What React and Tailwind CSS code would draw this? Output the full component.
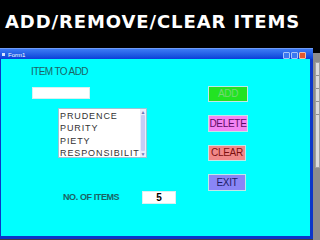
const sans = { fontFamily: '"Liberation Sans", Arial, sans-serif' };

const TitleButton = ({ close }) => (
  <div
    className={
      close
        ? 'w-[7px] h-[7px] rounded-[1px] bg-[#e2582c] border border-[#f0c0a8]'
        : 'w-[7px] h-[7px] rounded-[1px] bg-[#3c78f0] border border-[#a8c4f8]'
    }
  />
);

const FormButton = ({ label, className }) => (
  <div
    className={`flex items-center justify-center border border-[#c0e8e8] text-[10px] leading-none tracking-[-0.3px] ${className}`}
    style={sans}
  >
    {label}
  </div>
);

const items = ['PRUDENCE', 'PURITY', 'PIETY', 'RESPONSIBILITY'];

export default function App() {
  return (
    <div className="w-[320px] h-[240px] bg-black overflow-hidden flex flex-col">
      {/* Slide heading */}
      <div className="h-[48px] pt-[13px] pl-[5px]">
        <div
          className="text-white font-bold text-[18px] leading-[18px] tracking-[0.9px] whitespace-nowrap"
          style={{ fontFamily: '"DejaVu Sans", Arial, sans-serif' }}
        >
          ADD/REMOVE/CLEAR ITEMS
        </div>
      </div>

      <div className="flex h-[192px]">
        {/* VB form window */}
        <div className="w-[313px] flex flex-col bg-[#404040]">
          <div className="h-[11px] flex items-center pt-[1px] px-[2px] bg-gradient-to-b from-[#3d7bf5] to-[#0a3fd8] border-t border-[#6f9cf7]">
            <div className="w-[3px] h-[3px] bg-[#d8e4ff] mr-[3px]" />
            <span className="text-[6px] leading-none text-white" style={sans}>
              Form1
            </span>
            <div className="ml-auto flex gap-[1px] mr-[5px] pt-[2px]">
              <TitleButton />
              <TitleButton />
              <TitleButton close />
            </div>
          </div>

          <div className="h-[177px] flex bg-[#00ffff] border-l border-r-[3px] border-[#0b35c9]">
            {/* Left side */}
            <div className="w-[207px] pl-[30px] pt-[7px] flex flex-col items-start">
              <div
                className="text-[10px] leading-[12px] tracking-[-0.6px] text-[#1b6464] whitespace-nowrap"
                style={sans}
              >
                ITEM TO ADD
              </div>
              <div className="mt-[9px] ml-[1px] w-[58px] h-[12px] bg-white border border-[#d8f0f0]" />

              <div className="mt-[9px] ml-[27px] w-[89px] h-[50px] bg-white border border-[#9cc4d4] flex overflow-hidden">
                <div className="flex-1 pl-[1px] pt-[1px] overflow-hidden">
                  {items.map((item) => (
                    <div
                      key={item}
                      className="text-[9px] leading-[12.3px] tracking-[0.9px] text-[#333333] whitespace-nowrap"
                      style={sans}
                    >
                      {item}
                    </div>
                  ))}
                </div>
                <div className="w-[6px] flex flex-col items-center bg-[#e8ecfb]">
                  <div className="text-[5px] leading-[6px] text-[#6a7ab8]">▲</div>
                  <div className="flex-1 w-[4px] bg-[#c4cdf5] rounded-[1px]" />
                  <div className="text-[5px] leading-[6px] text-[#6a7ab8]">▼</div>
                </div>
              </div>

              <div className="mt-[33px] ml-[32px] flex items-center">
                <span
                  className="w-[79px] text-[9px] font-bold leading-none tracking-[-0.4px] text-[#1b6464] whitespace-nowrap"
                  style={sans}
                >
                  NO. OF ITEMS
                </span>
                <div
                  className="w-[34px] h-[13px] bg-white border border-[#d8f0f0] flex items-center justify-center text-[10px] font-bold leading-none text-black"
                  style={sans}
                >
                  5
                </div>
              </div>
            </div>

            {/* Right side: buttons */}
            <div className="pt-[27px] flex flex-col gap-[13px]">
              <FormButton label="ADD" className="w-[40px] h-[16px] bg-[#22e322] text-[#74d874]" />
              <FormButton label="DELETE" className="w-[40px] h-[17px] bg-[#f384f3] text-[#5e0c66]" />
              <FormButton label="CLEAR" className="w-[38px] h-[16px] bg-[#f18888] text-[#7c1010]" />
              <FormButton label="EXIT" className="w-[38px] h-[17px] bg-[#8a86f6] text-[#1c1c66]" />
            </div>
          </div>
          <div className="h-[3px] bg-[#0b35c9]" />
        </div>

        {/* Edge of another window */}
        <div className="flex-1 flex flex-col">
          <div className="h-[5px] bg-black" />
          <div className="flex-1 bg-[#8c8c8c] pl-[2px] pt-[9px]">
            <div className="h-[106px] bg-[#dcdcdc] border border-[#a0a0a0] flex flex-col gap-[12px] pt-[12px]">
              <div className="h-px bg-[#909090]" />
              <div className="h-px bg-[#909090]" />
              <div className="h-px bg-[#909090]" />
              <div className="h-px bg-[#909090]" />
            </div>
          </div>
        </div>
      </div>
    </div>
  );
}
